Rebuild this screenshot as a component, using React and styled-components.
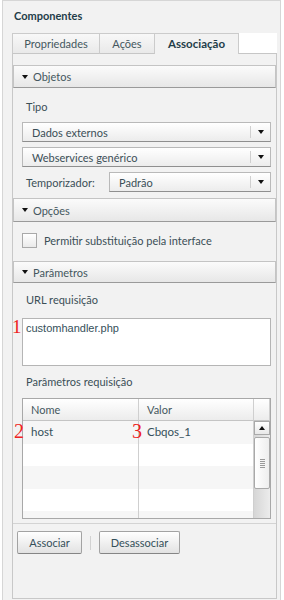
import React from 'react';
import styled, { createGlobalStyle } from 'styled-components';

const GlobalStyle = createGlobalStyle`
  body {
    margin: 0;
    background: #ffffff;
    font-family: Lato, "Open Sans", "Liberation Sans", sans-serif;
    font-size: 11px;
    color: #3b4f57;
  }
`;

const Frame = styled.div`
  box-sizing: border-box;
  margin-left: 2px;
  width: 279px;
  height: 600px;
  border: 1px solid #d6d6d6;
  border-bottom: none;
  background: #f2f2f2;
  padding: 0 3px 0 9px;
`;

const Title = styled.div`
  height: 14px;
  line-height: 14px;
  margin-top: 8px;
  margin-bottom: 10px;
  padding-left: 2px;
  font-weight: bold;
  color: #1f3d49;
`;

const TabBar = styled.div`
  display: flex;
  height: 21px;
`;

const Tab = styled.div`
  box-sizing: border-box;
  width: ${p => p.w}px;
  height: 21px;
  line-height: 19px;
  text-align: center;
  border: 1px solid #cbcbcb;
  border-left: ${p => (p.first ? '1px solid #cbcbcb' : 'none')};
  border-bottom: ${p => (p.active ? 'none' : '1px solid #c6c6c6')};
  background: ${p => (p.active ? '#f2f2f2' : 'linear-gradient(#f8f8f8, #e9e9e9)')};
  font-weight: ${p => (p.active ? 'bold' : 'normal')};
  color: ${p => (p.active ? '#1f3d49' : '#44575e')};
  font-size: ${p => (p.active ? '11.5px' : '11px')};
`;

const TabFiller = styled.div`
  flex: 1;
  height: 21px;
  box-sizing: border-box;
  background: #ffffff;
  border-bottom: 1px solid #c6c6c6;
`;

const Panel = styled.div`
  box-sizing: border-box;
  height: 545px;
  border: 1px solid #c8c8c8;
  border-top: none;
  display: flex;
  flex-direction: column;
`;

const Content = styled.div`
  padding-top: 11px;
`;

const SectionHeader = styled.div`
  box-sizing: border-box;
  height: ${p => p.h || 23}px;
  margin: ${p => p.mt || 0}px 0 0 0;
  border: 1px solid #c4c4c4;
  border-bottom-color: #9a9a9a;
  background: linear-gradient(#fbfbfb, #e7e7e7);
  display: flex;
  align-items: center;
  padding-left: 8px;
  gap: 5px;
  color: #44575e;
`;

const Caret = styled.span`
  width: 0;
  height: 0;
  border-left: 3.5px solid transparent;
  border-right: 3.5px solid transparent;
  border-top: 4px solid #111;
`;

const Body = styled.div`
  padding: 0 5px 0 9px;
`;

const Label = styled.div`
  height: 14px;
  line-height: 14px;
  margin-top: ${p => p.mt}px;
  padding-left: ${p => p.pl || 0}px;
`;

const SelectRow = styled.div`
  display: flex;
  align-items: center;
  margin-top: ${p => p.mt}px;
`;

const InlineLabel = styled.span`
  width: 87px;
  padding-left: 4px;
  box-sizing: border-box;
`;

const Select = styled.div`
  flex: 1;
  box-sizing: border-box;
  height: 20px;
  border: 1px solid #b9b9b9;
  border-bottom-color: #8f8f8f;
  background: linear-gradient(#ffffff, #ececec);
  display: flex;
  align-items: center;
  padding-left: 9px;
`;

const SelectText = styled.span`
  flex: 1;
`;

const SelectButton = styled.span`
  width: 19px;
  height: 12px;
  border-left: 1px solid #cfcfcf;
  display: flex;
  align-items: center;
  justify-content: center;
`;

const CheckRow = styled.div`
  display: flex;
  align-items: center;
  gap: 7px;
  margin-top: 10px;
  height: 16px;
`;

const CheckBox = styled.span`
  box-sizing: border-box;
  width: 15px;
  height: 15px;
  border: 1px solid #a9a9a9;
  background: linear-gradient(#ffffff, #eaeaea);
`;

const TextArea = styled.div`
  position: relative;
  box-sizing: border-box;
  margin-top: 11px;
  height: 48px;
  border: 1px solid #b5b5b5;
  background: #ffffff;
  padding: 2px 3px;
  line-height: 14px;
  font-family: "Liberation Sans", Arial, sans-serif;
  font-size: 11px;
  color: #35505a;
`;

const Marker = styled.span`
  position: absolute;
  z-index: 2;
  left: ${p => p.x}px;
  top: ${p => p.y}px;
  font-family: "Liberation Serif", "Times New Roman", serif;
  font-size: ${p => p.size || 20}px;
  line-height: 1;
  color: #ee2222;
`;

const TableWrap = styled.div`
  position: relative;
  margin-top: 9px;
`;

const Table = styled.div`
  box-sizing: border-box;
  height: 121px;
  border: 1px solid #a8a8a8;
  background: #ffffff;
  display: grid;
  grid-template-columns: 116px 115px 1fr;
  grid-template-rows: 22px 1fr;
  overflow: hidden;
`;

const HeadCell = styled.div`
  border-right: 1px solid #cfcfcf;
  border-bottom: 1px solid #c4c4c4;
  background: linear-gradient(#ffffff, #ececec);
  padding-left: 8px;
  line-height: 21px;
  color: #44575e;
  &:last-child {
    border-right: none;
  }
`;

const Column = styled.div`
  border-right: 1px solid #cfcfcf;
`;

const Cell = styled.div`
  height: 22.5px;
  line-height: 22px;
  padding-left: 8px;
  background: ${p => (p.odd ? '#f6f6f6' : '#ffffff')};
  color: #35505a;
  font-size: 11.5px;
`;

const ScrollBar = styled.div`
  display: flex;
  flex-direction: column;
  background: linear-gradient(to right, #d6d6d6, #ececec);
`;

const ScrollButton = styled.div`
  box-sizing: border-box;
  height: 14px;
  border: 1px solid #a9a9a9;
  background: linear-gradient(#ffffff, #e8e8e8);
  display: flex;
  align-items: center;
  justify-content: center;
`;

const Thumb = styled.div`
  box-sizing: border-box;
  margin-top: 2px;
  height: 52px;
  border: 1px solid #a9a9a9;
  border-radius: 2px;
  background: linear-gradient(to right, #ffffff, #eeeeee);
  display: flex;
  flex-direction: column;
  align-items: center;
  justify-content: center;
  gap: 1px;
`;

const Grip = styled.span`
  width: 5px;
  height: 1px;
  background: #9a9a9a;
`;

const Track = styled.div`
  flex: 1;
`;

const UpCaret = styled.span`
  width: 0;
  height: 0;
  border-left: 3px solid transparent;
  border-right: 3px solid transparent;
  border-bottom: 4px solid #111;
`;

const Footer = styled.div`
  border-top: 1px solid #d3d3d3;
  margin-top: auto;
  margin-bottom: 44px;
  padding: 7px 4px 0;
  display: flex;
  align-items: center;
`;

const Button = styled.button`
  box-sizing: border-box;
  width: ${p => p.w}px;
  height: 23px;
  border: 1px solid #a3a3a3;
  border-bottom-color: #858585;
  border-radius: 2px;
  background: linear-gradient(#ffffff, #e2e2e2);
  font-family: inherit;
  font-size: 11px;
  color: #35505a;
  padding: 0;
`;

const Divider = styled.span`
  width: 1px;
  height: 14px;
  background: #d2d2d2;
  margin: 0 8px 0 8px;
`;

function Dropdown({ children }) {
  return (
    <Select>
      <SelectText>{children}</SelectText>
      <SelectButton>
        <Caret />
      </SelectButton>
    </Select>
  );
}

const rows = [
  ['host', 'Cbqos_1'],
  ['', ''],
  ['', ''],
  ['', ''],
  ['', ''],
];

export default function App() {
  return (
    <>
      <GlobalStyle />
      <Frame>
        <Title>Componentes</Title>
        <TabBar>
          <Tab w={88} first>Propriedades</Tab>
          <Tab w={55}>Ações</Tab>
          <Tab w={84} active>Associação</Tab>
          <TabFiller />
        </TabBar>
        <Panel>
          <Content>
            <SectionHeader>
              <Caret />
              Objetos
            </SectionHeader>
            <Body>
              <Label mt={12} pl={4}>Tipo</Label>
              <SelectRow mt={8}>
                <Dropdown>Dados externos</Dropdown>
              </SelectRow>
              <SelectRow mt={5}>
                <Dropdown>Webservices genérico</Dropdown>
              </SelectRow>
              <SelectRow mt={5}>
                <InlineLabel>Temporizador:</InlineLabel>
                <Dropdown>Padrão</Dropdown>
              </SelectRow>
            </Body>
            <SectionHeader mt={6} h={24}>
              <Caret />
              Opções
            </SectionHeader>
            <Body>
              <CheckRow>
                <CheckBox />
                Permitir substituição pela interface
              </CheckRow>
            </Body>
            <SectionHeader mt={13} h={22}>
              <Caret />
              Parâmetros
            </SectionHeader>
            <Body>
              <Label mt={10} pl={4}>URL requisição</Label>
              <TextArea>
                <Marker x={-11} y={-2} size={19}>1</Marker>
                customhandler.php
              </TextArea>
              <Label mt={9} pl={4}>Parâmetros requisição</Label>
              <TableWrap>
                <Marker x={-8} y={23}>2</Marker>
                <Marker x={110} y={23}>3</Marker>
                <Table>
                  <HeadCell>Nome</HeadCell>
                  <HeadCell>Valor</HeadCell>
                  <HeadCell />
                  <Column>
                    {rows.map((r, i) => (
                      <Cell key={i} odd={i % 2 === 0}>{r[0]}</Cell>
                    ))}
                  </Column>
                  <Column>
                    {rows.map((r, i) => (
                      <Cell key={i} odd={i % 2 === 0}>{r[1]}</Cell>
                    ))}
                  </Column>
                  <ScrollBar>
                    <ScrollButton>
                      <UpCaret />
                    </ScrollButton>
                    <Thumb>
                      <Grip />
                      <Grip />
                      <Grip />
                      <Grip />
                      <Grip />
                    </Thumb>
                    <Track />
                    <ScrollButton>
                      <Caret />
                    </ScrollButton>
                  </ScrollBar>
                </Table>
              </TableWrap>
            </Body>
          </Content>
          <Footer>
            <Button w={65}>Associar</Button>
            <Divider />
            <Button w={81}>Desassociar</Button>
          </Footer>
        </Panel>
      </Frame>
    </>
  );
}
